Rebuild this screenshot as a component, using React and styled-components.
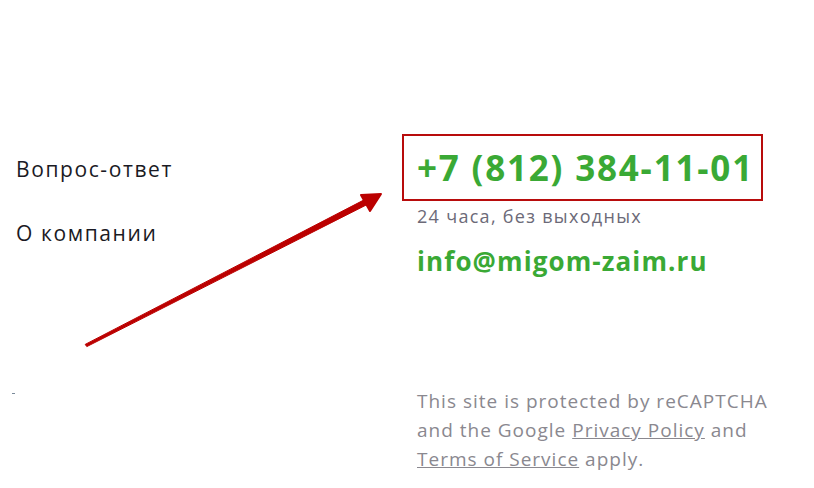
import React from 'react';
import styled, { createGlobalStyle } from 'styled-components';

const GlobalStyle = createGlobalStyle`
  body {
    margin: 0;
    background: #ffffff;
    font-family: "Open Sans", "Noto Sans", sans-serif;
  }
`;

const Page = styled.div`
  position: relative;
  width: 814px;
  height: 488px;
  display: grid;
  grid-template-columns: 402px 1fr;
  padding-top: 134px;
  box-sizing: border-box;
  overflow: hidden;
`;

const Nav = styled.nav`
  display: flex;
  flex-direction: column;
  gap: 36px;
  padding: 21px 0 0 16px;
  position: relative;
`;

const NavLink = styled.a`
  font-size: 21px;
  line-height: 28px;
  letter-spacing: 1.6px;
  color: #1a1a24;
  text-decoration: none;
`;

const Dot = styled.span`
  display: block;
  width: 3px;
  height: 1px;
  background: #7a8a9a;
  margin-top: 110px;
  margin-left: -4px;
`;

const Contacts = styled.div`
  display: flex;
  flex-direction: column;
  align-items: flex-start;
`;

const PhoneBox = styled.div`
  width: 361px;
  height: 67px;
  box-sizing: border-box;
  border: 2px solid #b80c0c;
  padding-left: 13px;
  display: flex;
  align-items: center;
`;

const Phone = styled.a`
  font-size: 35px;
  font-weight: 700;
  color: #3aa935;
  text-decoration: none;
  letter-spacing: 1.8px;
`;

const Hours = styled.div`
  padding-left: 15px;
  margin-top: 4px;
  font-size: 18px;
  line-height: 22px;
  letter-spacing: 1.3px;
  color: #6c6a78;
`;

const Email = styled.a`
  padding-left: 15px;
  margin-top: 16px;
  font-size: 26px;
  font-weight: 700;
  letter-spacing: 1.1px;
  color: #3aa935;
  text-decoration: none;
`;

const Notice = styled.p`
  margin: 108px 0 0;
  padding-left: 15px;
  width: 362px;
  font-size: 19px;
  line-height: 29px;
  letter-spacing: 1px;
  color: #8a888f;

  a {
    color: inherit;
  }
`;

const Arrow = styled.svg`
  position: absolute;
  left: 0;
  top: 0;
  pointer-events: none;
`;

export default function App() {
  return (
    <>
      <GlobalStyle />
      <Page>
        <Nav>
          <NavLink href="#">Вопрос-ответ</NavLink>
          <NavLink href="#">О компании</NavLink>
          <Dot />
        </Nav>
        <Contacts>
          <PhoneBox>
            <Phone href="#">+7 (812) 384-11-01</Phone>
          </PhoneBox>
          <Hours>24 часа, без выходных</Hours>
          <Email href="#">info@migom-zaim.ru</Email>
          <Notice>
            This site is protected by reCAPTCHA and the Google{' '}
            <a href="#">Privacy Policy</a> and <a href="#">Terms of Service</a> apply.
          </Notice>
        </Contacts>
        <Arrow width="814" height="488" viewBox="0 0 814 488">
          {/* tapered shaft, thin at the tail */}
          <path
            d="M85.2 344.4 L364.6 199.6 L367.4 204.4 L86.8 346.6 Z"
            fill="#bb0000"
            stroke="#bb0000"
            strokeWidth="1"
            strokeLinejoin="round"
          />
          <path d="M381 194 L361 195 L370 211 Z" fill="#bb0000" stroke="#bb0000" strokeWidth="2" strokeLinejoin="round" />
        </Arrow>
      </Page>
    </>
  );
}
